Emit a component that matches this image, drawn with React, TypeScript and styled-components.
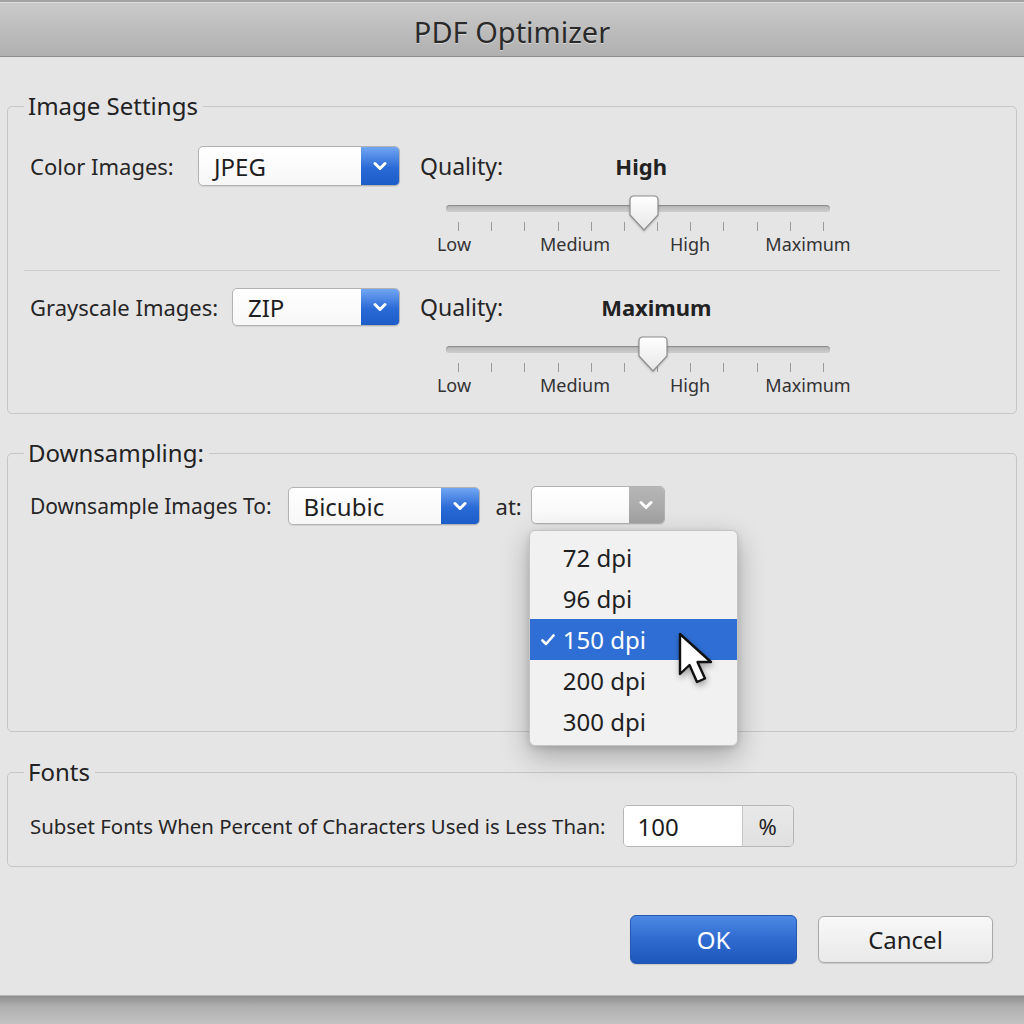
import React from "react";
import styled, { createGlobalStyle } from "styled-components";

const GlobalStyle = createGlobalStyle`
  html, body { margin: 0; padding: 0; }
  body {
    width: 1024px; height: 1024px; overflow: hidden;
    background: #c4c4c4;
    font-family: "Noto Sans", "Open Sans", sans-serif;
    color: #242424;
  }
`;

const Window = styled.div`
  width: 1024px; height: 1024px;
  display: flex; flex-direction: column;
`;

const TitleBar = styled.header`
  box-sizing: border-box;
  height: 57px; flex-shrink: 0;
  border-top: 2px solid #a3a3a3;
  border-bottom: 1px solid #8c8c8c;
  box-shadow: inset 0 1px 0 #dcdcdc;
  background: linear-gradient(#cbcbcb, #b0b0b0);
  display: flex; align-items: center; justify-content: center;
  padding-top: 4px;
`;

const Title = styled.h1`
  margin: 0;
  font-size: 29px; font-weight: 400; color: #2a2a2a;
  text-shadow: 0 1px 0 rgba(255,255,255,0.45);
`;

const Body = styled.main`
  flex: 1;
  box-sizing: border-box;
  background: #e6e5e6;
  padding: 0 7px;
  display: flex; flex-direction: column;
  border-bottom: 1px solid #b4b4b4;
`;

const Group = styled.fieldset<{ $top: number; $pt: number; $pb: number }>`
  margin: ${p => p.$top}px 0 0;
  padding: ${p => p.$pt}px 16px ${p => p.$pb}px 16px;
  border: 1px solid #c6c6c6;
  border-radius: 5px;
  min-width: 0;
`;

const Legend = styled.legend`
  padding: 0 5px 0 4px;
  font-size: 24px; line-height: 30px; color: #222;
`;

const ImageRow = styled.div`
  display: flex; gap: 20px; align-items: flex-start;
  padding: 0 6px;
`;

const LeftCol = styled.div`
  width: 370px; height: 40px;
  display: flex; align-items: center; justify-content: space-between;
`;

const Label = styled.span<{ $size?: number }>`
  font-size: ${p => p.$size ?? 22}px; color: #262626; white-space: nowrap;
`;

const SelectBox = styled.div<{ $w: number; $h: number }>`
  box-sizing: border-box;
  width: ${p => p.$w}px; height: ${p => p.$h}px;
  display: flex;
  border: 1px solid #b2b2b2; border-radius: 5px; overflow: hidden;
  background: linear-gradient(#ffffff, #f7f7f7);
  box-shadow: 0 1px 1px rgba(0,0,0,0.08);
`;

const SelectText = styled.span`
  flex: 1; display: flex; align-items: center;
  padding-left: 15px; font-size: 24px; color: #1e1e1e;
`;

const SelectArrow = styled.span<{ $tone: "blue" | "gray"; $w: number }>`
  width: ${p => p.$w}px; flex-shrink: 0;
  display: flex; align-items: center; justify-content: center;
  background: ${p => p.$tone === "blue"
    ? "linear-gradient(#71a6f3, #2a6ad6 55%, #1c5cc9)"
    : "linear-gradient(#b6b6b6, #a2a2a2)"};
`;

const Chevron = () => (
  <svg width="14" height="10" viewBox="0 0 14 10">
    <path d="M2 2.5 L7 7.5 L12 2.5" fill="none" stroke="#fff" strokeWidth="3" strokeLinecap="round" strokeLinejoin="round" />
  </svg>
);

const Select = ({ w, h, text, tone = "blue", arrowW = 38 }: { w: number; h: number; text: string; tone?: "blue" | "gray"; arrowW?: number }) => (
  <SelectBox $w={w} $h={h}>
    <SelectText>{text}</SelectText>
    <SelectArrow $tone={tone} $w={arrowW}><Chevron /></SelectArrow>
  </SelectBox>
);

const QualityCol = styled.div`
  width: 432px;
  display: flex; flex-direction: column;
`;

const QualityHeader = styled.div`
  position: relative; height: 40px;
  display: flex; align-items: center;
`;

const ValueText = styled.span`
  position: absolute; top: 0; height: 40px;
  display: flex; align-items: center;
  transform: translateX(-50%);
  font-size: 22px; font-weight: 700; color: #222;
`;

const SliderArea = styled.div`
  position: relative;
  height: 70px;
`;

const Track = styled.div`
  position: relative;
  margin: 19px 0 0 26px;
  width: 384px; height: 7px;
  border-radius: 4px;
  background: linear-gradient(#b4b4b4, #cdcdcd);
  box-shadow: inset 0 1px 1px rgba(0,0,0,0.25);
`;

const Thumb = styled.svg`
  position: absolute; top: -10px;
  filter: drop-shadow(0 1px 1px rgba(0,0,0,0.2));
`;

const Ticks = styled.div`
  margin: 10px 0 0 38px;
  width: 366px; height: 9px;
  display: flex; justify-content: space-between;
`;

const Tick = styled.span`
  width: 1px; height: 9px; background: #9a9a9a;
`;

const ScaleLabels = styled.div`
  position: relative; height: 22px; margin-top: 2px;
`;

const ScaleLabel = styled.span`
  position: absolute; top: 0;
  transform: translateX(-50%);
  font-size: 18px; line-height: 22px; color: #333;
  white-space: nowrap;
`;

const scale = [
  { t: "Low", x: 34 },
  { t: "Medium", x: 155 },
  { t: "High", x: 270 },
  { t: "Maximum", x: 388 },
];

const Slider = ({ frac }: { frac: number }) => (
  <SliderArea>
    <Track>
      <Thumb width="30" height="37" viewBox="0 0 30 37" style={{ left: frac * 384 - 15 }}>
        <defs>
          <linearGradient id="tg" x1="0" y1="0" x2="0" y2="1">
            <stop offset="0" stopColor="#ffffff" />
            <stop offset="1" stopColor="#e6e6e6" />
          </linearGradient>
        </defs>
        <path d="M5 1 H25 Q29 1 29 5 V20 L15 35 L1 20 V5 Q1 1 5 1 Z" fill="url(#tg)" stroke="#8d8d8d" strokeWidth="1.2" />
      </Thumb>
    </Track>
    <Ticks>
      {Array.from({ length: 12 }).map((_, i) => <Tick key={i} />)}
    </Ticks>
    <ScaleLabels>
      {scale.map(s => <ScaleLabel key={s.t} style={{ left: s.x }}>{s.t}</ScaleLabel>)}
    </ScaleLabels>
  </SliderArea>
);

const Separator = styled.hr`
  margin: 14px 0 16px; border: 0; height: 1px; background: #cdcdcd;
`;

const ImageSettingRow = ({ label, select, selectW, selectH, value, frac, valueShift = 0 }: { label: string; select: string; selectW: number; selectH: number; value: string; frac: number; valueShift?: number }) => (
  <ImageRow>
    <LeftCol>
      <Label>{label}</Label>
      <Select w={selectW} h={selectH} text={select} />
    </LeftCol>
    <QualityCol>
      <QualityHeader>
        <Label $size={23}>Quality:</Label>
        <ValueText style={{ left: 26 + frac * 384 + valueShift }}>{value}</ValueText>
      </QualityHeader>
      <Slider frac={frac} />
    </QualityCol>
  </ImageRow>
);

const DownRow = styled.div`
  display: flex; align-items: center; gap: 16px;
  padding: 0 6px;
`;

const AtLabel = styled(Label)`
  margin-right: -7px;
`;

const AtWrap = styled.div`
  position: relative;
  margin-top: -2px;
`;

const Menu = styled.ul`
  position: absolute; top: 44px; left: -2px;
  width: 209px;
  box-sizing: border-box;
  margin: 0; padding: 6px 0 3px; list-style: none;
  background: #f1f1f1;
  border: 1px solid #c4c4c4; border-radius: 6px;
  box-shadow: 0 10px 28px rgba(0,0,0,0.28), 0 2px 6px rgba(0,0,0,0.12);
  z-index: 5;
`;

const MenuItem = styled.li<{ $selected?: boolean }>`
  height: 41px;
  display: grid; grid-template-columns: 33px 1fr; align-items: center;
  font-size: 24px;
  color: ${p => (p.$selected ? "#fff" : "#1f1f1f")};
  background: ${p => (p.$selected ? "#2f6fd5" : "transparent")};
`;

const CheckCell = styled.span`
  display: flex; justify-content: center; padding-left: 4px;
`;

const Cursor = styled.svg`
  position: absolute; left: 147px; top: 100px;
  filter: drop-shadow(1px 3px 3px rgba(0,0,0,0.35));
`;

const dpis = ["72 dpi", "96 dpi", "150 dpi", "200 dpi", "300 dpi"];

const SubsetRow = styled.div`
  display: flex; align-items: center; gap: 17px;
  padding: 0 6px;
`;

const PercentField = styled.div`
  box-sizing: border-box;
  height: 42px; display: flex;
  border: 1px solid #b6b6b6; border-radius: 5px; overflow: hidden;
`;

const PercentValue = styled.span`
  width: 118px; background: #fff;
  display: flex; align-items: center; padding-left: 14px; box-sizing: border-box;
  font-size: 24px; color: #1c1c1c;
`;

const PercentUnit = styled.span`
  width: 50px; background: linear-gradient(#e9e9e9, #e0e0e0);
  border-left: 1px solid #c6c6c6;
  display: flex; align-items: center; justify-content: center;
  font-size: 22px; color: #222;
`;

const Footer = styled.div`
  margin-top: 48px;
  display: flex; justify-content: flex-end; align-items: center; gap: 21px;
  padding-right: 24px;
`;

const Button = styled.button<{ $primary?: boolean }>`
  box-sizing: border-box;
  width: ${p => (p.$primary ? 167 : 175)}px;
  height: ${p => (p.$primary ? 49 : 47)}px;
  border-radius: 6px;
  font-family: inherit; font-size: 24px;
  color: ${p => (p.$primary ? "#fff" : "#1e1e1e")};
  border: 1px solid ${p => (p.$primary ? "#2458b3" : "#a8a8a8")};
  background: ${p => (p.$primary
    ? "linear-gradient(#4c88e2, #2f6bd0 50%, #1e57bb)"
    : "linear-gradient(#f8f8f8, #e9e9e9)")};
  box-shadow: 0 1px 1px rgba(0,0,0,0.12);
`;

const Shade = styled.div`
  height: 28px; flex-shrink: 0;
  background: linear-gradient(#8e8e8e, #aeaeae 35%, #c3c3c3);
`;

export default function App() {
  return (
    <>
      <GlobalStyle />
      <Window>
        <TitleBar><Title>PDF Optimizer</Title></TitleBar>
        <Body>
          <Group $top={34} $pt={25} $pb={16}>
            <Legend>Image Settings</Legend>
            <ImageSettingRow label="Color Images:" select="JPEG" selectW={202} selectH={40} value="High" frac={0.516} valueShift={-3} />
            <Separator />
            <ImageSettingRow label="Grayscale Images:" select="ZIP" selectW={168} selectH={38} value="Maximum" frac={0.54} valueShift={3} />
          </Group>

          <Group $top={24} $pt={19} $pb={206}>
            <Legend>Downsampling:</Legend>
            <DownRow>
              <Label $size={21}>Downsample Images To:</Label>
              <Select w={192} h={38} text="Bicubic" />
              <AtLabel>at:</AtLabel>
              <AtWrap>
                <Select w={134} h={38} text="" tone="gray" arrowW={35} />
                <Menu>
                  {dpis.map(d => (
                    <MenuItem key={d} $selected={d === "150 dpi"}>
                      <CheckCell>
                        {d === "150 dpi" && (
                          <svg width="14" height="12" viewBox="0 0 14 12">
                            <path d="M1.5 6.5 L5 10 L12.5 1.5" fill="none" stroke="#fff" strokeWidth="2.6" strokeLinecap="round" strokeLinejoin="round" />
                          </svg>
                        )}
                      </CheckCell>
                      <span>{d}</span>
                    </MenuItem>
                  ))}
                  <Cursor width="42" height="56" viewBox="0 0 42 56">
                    <path d="M3 3 L3 43 L12.5 34 L20 51 L28 47.5 L20.5 31 L34 31 Z" fill="#fff" stroke="#111" strokeWidth="2.4" strokeLinejoin="round" />
                  </Cursor>
                </Menu>
              </AtWrap>
            </DownRow>
          </Group>

          <Group $top={25} $pt={18} $pb={19}>
            <Legend>Fonts</Legend>
            <SubsetRow>
              <Label $size={20.4}>Subset Fonts When Percent of Characters Used is Less Than:</Label>
              <PercentField>
                <PercentValue>100</PercentValue>
                <PercentUnit>%</PercentUnit>
              </PercentField>
            </SubsetRow>
          </Group>

          <Footer>
            <Button $primary>OK</Button>
            <Button>Cancel</Button>
          </Footer>
        </Body>
        <Shade />
      </Window>
    </>
  );
}
